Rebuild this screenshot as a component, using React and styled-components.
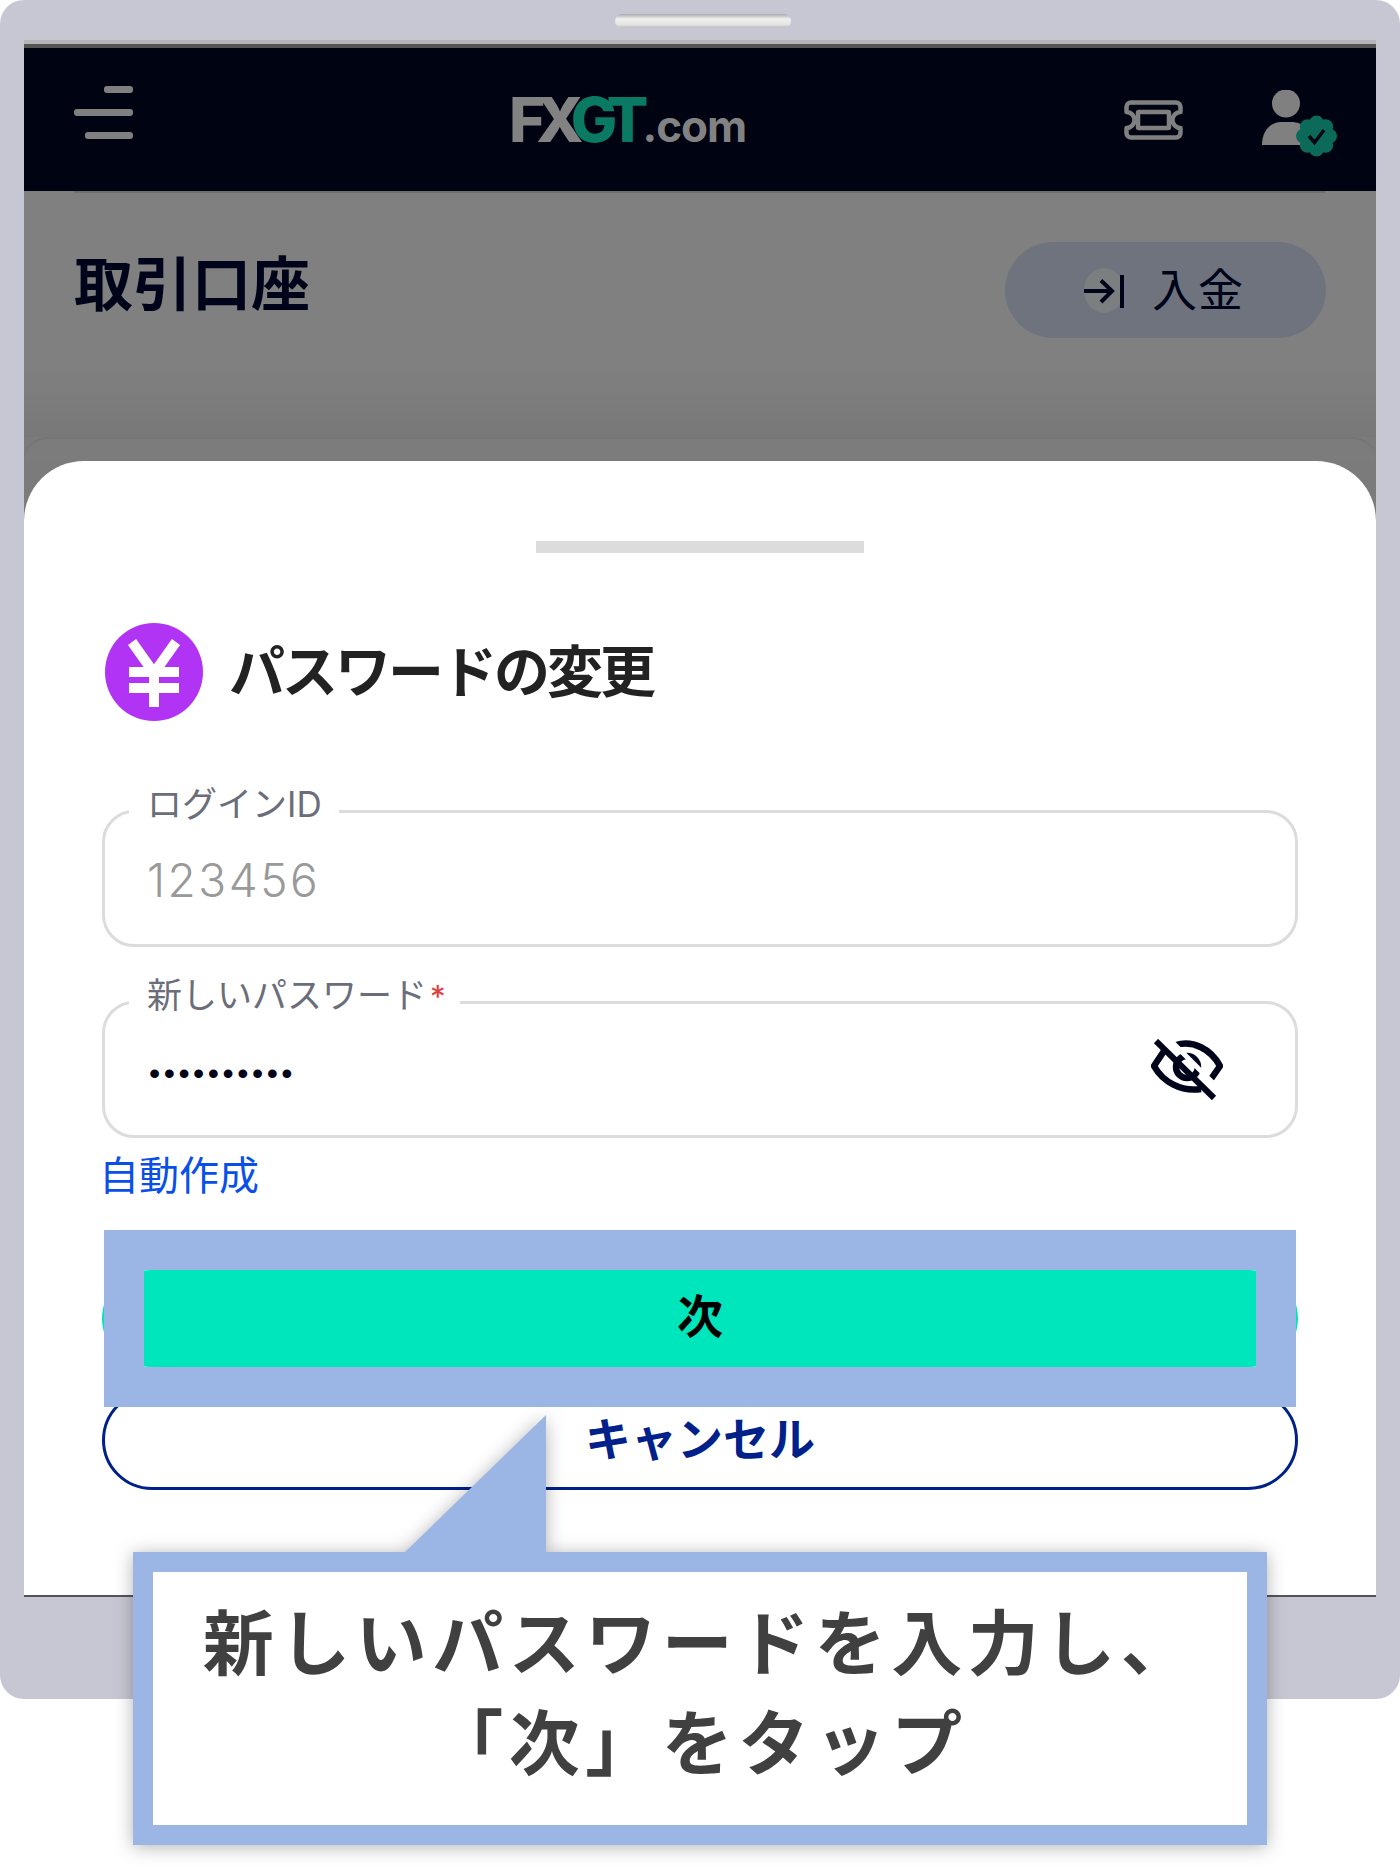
import React from 'react';
import styled, { createGlobalStyle } from 'styled-components';

const GlobalStyle = createGlobalStyle`
  html, body {
    margin: 0;
    padding: 0;
    background: #fff;
  }
  body {
    width: 1400px;
    height: 1868px;
    overflow: hidden;
    font-family: "Noto Sans CJK JP", "Liberation Sans", sans-serif;
  }
`;

const Frame = styled.div`
  position: relative;
  box-sizing: border-box;
  width: 1400px;
  height: 1699px;
  padding: 14px 24px 102px;
  display: flex;
  flex-direction: column;
  background: #c7c7d3;
  border-radius: 24px;
`;

const Speaker = styled.div`
  flex: none;
  width: 176px;
  height: 14px;
  margin: 0 0 12px 591px;
  border-radius: 7px;
  background: linear-gradient(#a9a9ab, #f0f0f0 35%, #e4e4e4 75%, #bdbdbd);
`;

const Screen = styled.div`
  flex: 1;
  min-height: 0;
  display: flex;
  flex-direction: column;
  background: #7a7b7a;
`;

const TopEdge = styled.div`
  flex: none;
  height: 8px;
  background: linear-gradient(#b5b5b8 50%, #555 50%);
`;

const Header = styled.header`
  flex: none;
  height: 143px;
  display: flex;
  align-items: center;
  padding: 0 39px 0 50px;
  background: #000412;
`;

const Burger = styled.div`
  display: flex;
  flex-direction: column;
  align-items: flex-end;
  gap: 16px;
  width: 59px;
  margin-top: -14px;
`;

const BurgerBar = styled.span`
  display: block;
  width: ${({ $w }) => $w}px;
  height: 7px;
  border-radius: 3px;
  background: #808080;
`;

const Logo = styled.div`
  width: 240px;
  margin: 0 0 0 376px;
  font-family: Inter, "Liberation Sans", sans-serif;
  font-size: 62px;
  line-height: 1;
  font-weight: 800;
  letter-spacing: -9px;
  color: #828282;
  white-space: nowrap;
`;

const LogoGreen = styled.span`
  color: #0b7a62;
`;

const LogoDomain = styled.span`
  font-size: 44px;
  font-weight: 700;
  letter-spacing: -1px;
  margin-left: 3px;
`;

const TicketIcon = styled.svg`
  margin-left: auto;
`;

const UserIcon = styled.svg`
  margin: 8px 0 0 79px;
`;

const HeaderRule = styled.div`
  flex: none;
  height: 2px;
  background: linear-gradient(90deg, #808080 50px, #6e6e6e 50px, #6e6e6e calc(100% - 51px), #808080 calc(100% - 51px));
`;

const PageHead = styled.div`
  flex: none;
  height: 180px;
  display: flex;
  align-items: center;
  justify-content: space-between;
  padding: 0 50px 0 50px;
  background: #808080;
`;

const PageTitle = styled.h1`
  margin: -5px 0 0;
  font-size: 59px;
  line-height: 1;
  font-weight: 700;
  color: #00041a;
`;

const DepositButton = styled.div`
  box-sizing: border-box;
  width: 321px;
  height: 96px;
  margin-top: 14px;
  display: flex;
  align-items: center;
  padding-left: 79px;
  gap: 26px;
  border-radius: 48px;
  background: #6f737d;
  font-size: 45px;
  color: #00041a;
`;

const DepositLabel = styled.span`
  margin-top: -6px;
  line-height: 1;
  letter-spacing: 1px;
`;

const Band = styled.div`
  flex: none;
  height: 64px;
  background: linear-gradient(#7f7f7f, #787878);
`;

const RearCard = styled.div`
  flex: none;
  height: 24px;
  border-radius: 60px 60px 0 0;
  background: #7b7c7b;
  border-top: 2px solid #757575;
  box-sizing: border-box;
`;

const Sheet = styled.section`
  flex: 1;
  min-height: 0;
  box-sizing: border-box;
  display: flex;
  flex-direction: column;
  padding: 80px 78px 0;
  border-radius: 60px 60px 0 0;
  background: #fff;
  border-bottom: 2px solid #555;
`;

const Handle = styled.div`
  flex: none;
  width: 328px;
  height: 12px;
  margin: 0 auto;
  background: #dcdcdc;
`;

const TitleRow = styled.div`
  flex: none;
  display: flex;
  align-items: center;
  gap: 26px;
  margin: 70px 0 89px 3px;
  height: 98px;
`;

const SheetTitle = styled.h2`
  margin: -8px 0 0;
  font-size: 56px;
  line-height: 1;
  font-weight: 700;
  letter-spacing: -3px;
  color: #222;
`;

const Field = styled.div`
  position: relative;
  flex: none;
  box-sizing: border-box;
  height: 137px;
  display: flex;
  align-items: center;
  padding: 0 72px 0 42px;
  margin-bottom: ${({ $gap }) => $gap}px;
  border: 3px solid #dcdcdc;
  border-radius: 32px;
`;

const FieldLabel = styled.label`
  position: absolute;
  top: -27px;
  left: 24px;
  padding: 0 17px 0 18px;
  background: #fff;
  font-family: Inter, "Noto Sans CJK JP", sans-serif;
  font-size: 35px;
  line-height: 36px;
  font-weight: 400;
  color: #6b6e7a;
  white-space: nowrap;
`;

const Required = styled.span`
  margin: 0 -3px 0 3px;
  font-size: 31px;
  color: #e0403f;
`;

const ReadonlyValue = styled.div`
  margin-top: 2px;
  font-family: Inter, sans-serif;
  font-size: 46px;
  line-height: 1;
  font-weight: 300;
  letter-spacing: 2.5px;
  color: #999;
`;

const SecretValue = styled.div`
  flex: 1;
  margin: 6px 0 0 2px;
  font-family: "Liberation Sans", sans-serif;
  font-size: 32px;
  line-height: 1;
  letter-spacing: 3.5px;
  color: #00041a;
`;

const AutoLink = styled.a`
  flex: none;
  margin: 15px 0 0 -3px;
  height: 40px;
  font-size: 40px;
  line-height: 40px;
  color: #0a50e8;
`;

const NextButton = styled.button`
  flex: none;
  height: 97px;
  margin-top: 77px;
  padding: 0 0 12px;
  border: 0;
  border-radius: 49px;
  background: #00e6bc;
  font-family: inherit;
  font-size: 46px;
  font-weight: 700;
  color: #000;
`;

const CancelButton = styled.button`
  flex: none;
  box-sizing: border-box;
  height: 100px;
  margin-top: 23px;
  padding: 0 0 8px;
  border: 3px solid #00208a;
  border-radius: 50px;
  background: #fff;
  font-family: inherit;
  font-size: 46px;
  font-weight: 700;
  color: #00208a;
`;

const Highlight = styled.div`
  position: absolute;
  left: 104px;
  top: 1230px;
  box-sizing: border-box;
  width: 1192px;
  height: 177px;
  border: 40px solid #9bb6e4;
`;

const Callout = styled.div`
  position: absolute;
  left: 133px;
  top: 1552px;
  width: 1134px;
  height: 293px;
  filter: drop-shadow(0 2px 9px rgba(0, 0, 0, 0.3));
`;

const CalloutTail = styled.div`
  position: absolute;
  left: 270px;
  bottom: calc(100% - 2px);
  width: 143px;
  height: 139px;
  background: #9bb6e4;
  clip-path: polygon(100% 0, 100% 100%, 0 100%);
`;

const CalloutBox = styled.div`
  box-sizing: border-box;
  height: 100%;
  padding: 16px 0 0;
  border: 20px solid #9bb6e4;
  background: #fff;
  text-align: center;
  font-size: 71px;
  line-height: 100px;
  font-weight: 700;
  letter-spacing: 5.5px;
  color: #404040;
`;

const CalloutLine = styled.div`
  white-space: nowrap;
`;

const scallops = [0, 45, 90, 135, 180, 225, 270, 315];

export default function App() {
  return (
    <>
      <GlobalStyle />
      <Frame>
        <Speaker />
        <Screen>
          <TopEdge />
          <Header>
            <Burger>
              <BurgerBar $w={29} />
              <BurgerBar $w={59} />
              <BurgerBar $w={48} />
            </Burger>
            <Logo>
              FX<LogoGreen>GT</LogoGreen>
              <LogoDomain>.com</LogoDomain>
            </Logo>
            <TicketIcon width="59" height="40" viewBox="0 0 59 40" fill="none" stroke="#808080" strokeWidth="4.5" strokeLinejoin="round">
              <path d="M7 2.500H52a4.500 4.500 0 0 1 4.500 4.500V12a8 8 0 0 0 0 16v5a4.500 4.500 0 0 1-4.500 4.500H7A4.500 4.500 0 0 1 2.500 33V28a8 8 0 0 0 0-16V7A4.500 4.500 0 0 1 7 2.500Z" />
              <rect x="14" y="12" width="31" height="16" rx="1" />
            </TicketIcon>
            <UserIcon width="75" height="67" viewBox="0 0 75 67">
              <ellipse cx="24" cy="13.500" rx="14" ry="14" fill="#808080" />
              <path d="M0 55C0 40 9 32 19 32H29C36 32 40 34 42 38V55Z" fill="#808080" />
              <g fill="#0c6a58">
                <circle cx="54.500" cy="46" r="14" />
                {scallops.map(a => (
                  <circle
                    key={a}
                    cx={54.5 + 13 * Math.cos((a * Math.PI) / 180)}
                    cy={46 + 13 * Math.sin((a * Math.PI) / 180)}
                    r="7.500"
                  />
                ))}
              </g>
              <path d="M47 46l5.500 6.500L62 40" fill="none" stroke="#000412" strokeWidth="3.500" />
            </UserIcon>
          </Header>
          <HeaderRule />
          <PageHead>
            <PageTitle>取引口座</PageTitle>
            <DepositButton>
              <svg width="42" height="45" viewBox="0 0 42 45" fill="none" stroke="#00041a" strokeWidth="4">
                <ellipse cx="20" cy="22.500" rx="20" ry="22.500" fill="#7c7f80" stroke="none" />
                <path d="M0 23H28M17 12.500L28 23L17 34" />
                <path d="M38 7V40" />
              </svg>
              <DepositLabel>入金</DepositLabel>
            </DepositButton>
          </PageHead>
          <Band />
          <RearCard />
          <Sheet>
            <Handle />
            <TitleRow>
              <svg width="98" height="98" viewBox="0 0 98 98">
                <circle cx="49" cy="49" r="49" fill="#b133f4" />
                <path d="M27 19L49 50L71 19M24 49H74M24 65H74M49 49V84" fill="none" stroke="#fff" strokeWidth="10" />
              </svg>
              <SheetTitle>パスワードの変更</SheetTitle>
            </TitleRow>
            <Field $gap={54}>
              <FieldLabel>ログインID</FieldLabel>
              <ReadonlyValue>123456</ReadonlyValue>
            </Field>
            <Field>
              <FieldLabel>
                新しいパスワード<Required>*</Required>
              </FieldLabel>
              <SecretValue>••••••••••</SecretValue>
              <svg width="72" height="62" viewBox="0 0 72 62" fill="none" stroke="#00041a" strokeWidth="6.500">
                <path d="M25 6C42 1 60 10 69 27L60 40" strokeLinejoin="round" />
                <path d="M13 12L3 27C12 43 30 53 50 50" strokeLinejoin="round" />
                <circle cx="36" cy="28" r="11" />
                <path d="M9 1L66 58" stroke="#fff" strokeWidth="5" transform="translate(5 -5)" />
                <path d="M5 2L63 59" strokeWidth="6" />
              </svg>
            </Field>
            <AutoLink>自動作成</AutoLink>
            <NextButton>次</NextButton>
            <CancelButton>キャンセル</CancelButton>
          </Sheet>
        </Screen>
        <Highlight />
        <Callout>
          <CalloutTail />
          <CalloutBox>
            <CalloutLine>新しいパスワードを入力し、</CalloutLine>
            <CalloutLine>「次」をタップ</CalloutLine>
          </CalloutBox>
        </Callout>
      </Frame>
    </>
  );
}
